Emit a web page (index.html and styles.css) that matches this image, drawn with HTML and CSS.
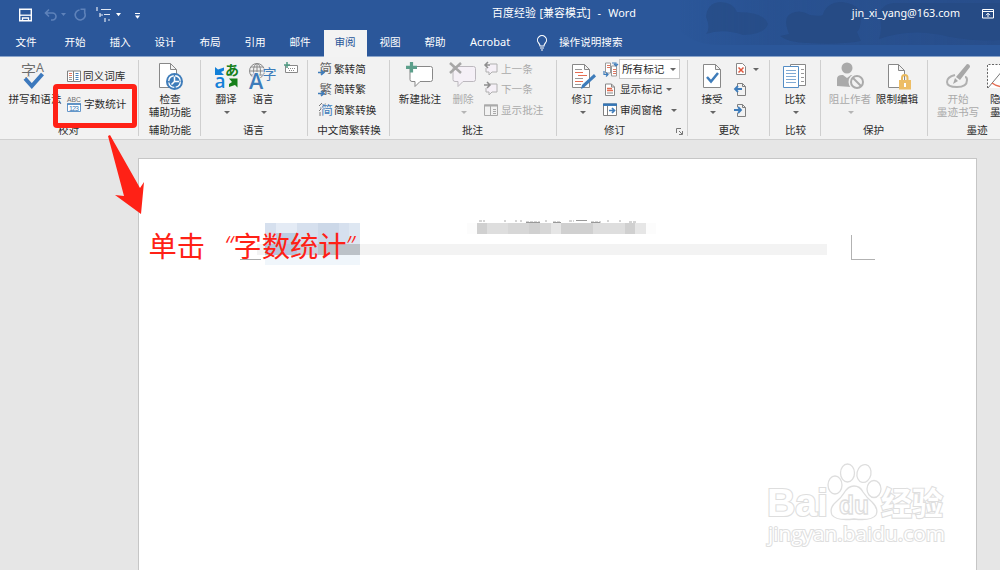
FILE: index.html
```html
<!DOCTYPE html>
<html lang="zh-CN">
<head>
<meta charset="utf-8">
<title>百度经验 - Word</title>
<link rel="stylesheet" href="styles.css">
</head>
<body>
<div class="app">
<header class="header">
  <svg class="clouds" width="320" height="46" viewBox="0 0 320 46">
    <defs><linearGradient id="haze"><stop offset="0" stop-color="#284f8d" stop-opacity="0"/><stop offset=".3" stop-color="#284f8d" stop-opacity=".7"/><stop offset="1" stop-color="#284d89" stop-opacity=".9"/></linearGradient></defs>
    <path fill="url(#haze)" d="M0 0H320V45H40Q15 45 0 30z"/>
    <g fill="#264b85"><path d="M26 34Q31 28 26 17Q27 3 40 2Q53 2 57 12Q84 12 88 24Q84 35 63 35Q43 28 26 34z" opacity=".7"/><path d="M100 36L109 34Q102 17 112 13Q121 9 130 15Q143 17 143 14Q147 2 162 2Q180 4 181 16Q181 29 177 32L181 41Q158 45 128 43Q109 43 100 36z"/><path d="M199 39Q203 29 199 13Q204 3 214 3H320V40Q300 42 270 37Q232 27 199 39z"/></g>
  </svg>
  <div class="titlebar">
    <div class="quick">
      <svg width="130" height="18" viewBox="0 0 130 18" fill="none">
        <path d="M1.700 4.200H13.300V15.800H1.700z" stroke="#fff" stroke-width="1.400"/><path d="M2 10.200H13" stroke="#fff" stroke-width="1.300"/><path d="M4.500 16v-3h6V16" stroke="#fff" stroke-width="1.300"/>
        <g stroke="#5e82ba" stroke-width="1.600"><path d="M31 4.500L27.500 8 31 11.500M28 8h6.500a3 3 0 0 1 0 7H33"/><path d="M61.500 5a5 5 0 1 0 5.500 3.500M62.500 4.200h4.200v4.500"/></g>
        <path d="M43 8h5l-2.500 3z" fill="#5e82ba"/>
        <path d="M79 2v4M83 4.500h10M82 8v4m0-2h3M86 9.500h6M87 13v4M90 15h2" stroke="#dfe7f4" stroke-width="1.200"/>
        <path d="M98 8h5l-2.500 3.200zM117 10.500h5l-2.500 3.200z" fill="#fff"/><path d="M117 8.500h5" stroke="#fff"/>
      </svg>
    </div>
    <div class="doc-title">百度经验 [兼容模式]&nbsp; -&nbsp; Word</div>
    <div class="account">jin_xi_yang@163.com</div>
    <svg class="display" width="12" height="10" viewBox="0 0 12 10" fill="none" stroke="#fff"><path d="M.5.5h11v8.500H.5zM1 2.500h10M6 8V4.500M4 6.200l2-2 2 2"/></svg>
  </div>
  <nav class="tabs">
    <span class="tab file">文件</span><span class="tab">开始</span><span class="tab">插入</span><span class="tab">设计</span><span class="tab">布局</span><span class="tab">引用</span><span class="tab">邮件</span><span class="tab active">审阅</span><span class="tab">视图</span><span class="tab">帮助</span><span class="tab acrobat">Acrobat</span>
    <span class="search"><svg width="12" height="16" viewBox="0 0 12 16" fill="none" stroke="#fff" stroke-width="1.100"><path d="M4 11Q4 9.500 2.600 8A4.500 4.500 0 1 1 9.400 8Q8 9.500 8 11zM4 13h4M5 15h2"/></svg>操作说明搜索</span>
  </nav>
</header>

<div class="ribbon">
  <section class="group g-proof">
    <div class="body">
      <div class="big w54"><svg width="28" height="30" viewBox="0 0 28 30"><text x="0" y="14" class="glyph" font-size="15">字</text><text x="15" y="9.500" class="glyph latin" font-size="12.500">A</text><path d="M5 16l6.500 7.500L22 11.500" fill="none" stroke="#f2f2f2" stroke-width="6"/><path d="M4 16.500l6.800 7.500L21.500 12" fill="none" stroke="#3d79bd" stroke-width="4"/></svg><span>拼写和语法</span></div>
      <div class="rows proof-rows">
        <div class="row"><svg width="14" height="14" viewBox="0 0 14 14" fill="none"><path d="M.5 2h6v10.500h-6zM6.500 2h7v10.500h-7z" fill="#fff" stroke="#808080"/><path d="M2 4.500h3M2 6.500h3" stroke="#e27861"/><path d="M2 8.500h3M2 10.500h3" stroke="#999"/><path d="M8.500 4.500h3M8.500 6.500h3M8.500 8.500h3M8.500 10.500h3" stroke="#4682bd"/></svg>同义词库</div>
        <div class="row"><svg width="15" height="16" viewBox="0 0 15 16"><text x="0" y="6" font-size="7" textLength="14" lengthAdjust="spacingAndGlyphs" class="glyph digits">ABC</text><path d="M.5 8h13v7.500H.5z" fill="#fff" stroke="#6497ca"/><path d="M0 8h14" stroke="#4682bd" stroke-width="1.500"/><text x="2" y="14.600" font-size="7" textLength="10" fill="#3475b5" class="digits">123</text></svg>字数统计</div>
      </div>
    </div>
    <div class="label">校对</div>
  </section>

  <section class="group g-access">
    <div class="body"><div class="big w54"><svg width="28" height="30" viewBox="0 0 28 30" fill="none"><path d="M3.500 1.500h11l6 6v18h-17zM14.500 1.500v6h6" fill="#fff" stroke="#888"/><circle cx="18.500" cy="19.500" r="8.500" fill="#3e7cba"/><circle cx="18.500" cy="19.500" r="5.800" stroke="#fff" stroke-width="1.300" stroke-dasharray="7.600 1.500"/><path d="M18.500 14.500v5h4.500M18.500 19.500l-3 3" stroke="#fff" stroke-width="1.500"/></svg><span>检查<br>辅助功能</span></div></div>
    <div class="label">辅助功能</div>
  </section>

  <section class="group g-lang">
    <div class="body">
      <div class="big w38"><svg width="26" height="30" viewBox="0 0 26 30"><path d="M2 5l3 2.500 6-2v3L8 10l3 3H2z" fill="#1380d8"/><text x="12" y="13" font-size="14" font-weight="700" fill="#16801b">あ</text><text x="1.500" y="26" font-size="19" fill="#1380d8" class="latin">a</text><path d="M16 16.500h8.500v9l-2.500-2.500-6 2v-3l3-2z" fill="#16801b"/></svg><span>翻译</span><i class="caret"></i></div>
      <div class="big w38"><svg width="28" height="30" viewBox="0 0 28 30"><g fill="none" stroke="#8a8a8a"><circle cx="8" cy="9" r="7.500"/><ellipse cx="8" cy="9" rx="3.500" ry="7.500"/><path d="M8 1.500v15M1 9h14M2 5h12M2 13h12"/></g><text x="0" y="27" font-size="21.500" fill="#3e7cba" stroke="#f2f2f2" stroke-width="2" paint-order="stroke" class="latin">A</text><text x="13.500" y="16.500" font-size="14" fill="#3e7cba" stroke="#f2f2f2" stroke-width="1" paint-order="stroke">字</text></svg><span>语言</span><i class="caret"></i></div>
      <svg class="keyboard" width="15" height="13" viewBox="0 0 15 13" fill="none"><path d="M1.500 3.500h12v7h-12z" fill="#fff" stroke="#888"/><path d="M4 6.500h8M5 8.500h6" stroke="#888" stroke-dasharray="1 1"/><path d="M3 0v6M0 3h6" stroke="#4f9a82" stroke-width="1.500"/></svg>
    </div>
    <div class="label">语言</div>
  </section>

  <section class="group g-conv">
    <div class="body"><div class="rows">
      <div class="row"><svg width="15" height="16" viewBox="0 0 15 16"><text x="1.500" y="12" font-size="12.500" fill="#666">简</text><path d="M0 11.500h5M3 9l3 2.500L3 14" fill="none" stroke="#3e7cba" stroke-width="1.600"/></svg>繁转简</div>
      <div class="row"><svg width="15" height="16" viewBox="0 0 15 16"><text x="1.500" y="12" font-size="12.500" fill="#666">繁</text><path d="M0 11.500h5M3 9l3 2.500L3 14" fill="none" stroke="#3e7cba" stroke-width="1.600"/></svg>简转繁</div>
      <div class="row"><svg width="15" height="16" viewBox="0 0 15 16"><path d="M1 4l3-3M4 3l4-1M2 6h3M1 9l2-2M2 10v4" stroke="#777" fill="none"/><text x="3" y="13" font-size="12" fill="#3e7cba" stroke="#f2f2f2" stroke-width="1" paint-order="stroke">简</text></svg>简繁转换</div>
    </div></div>
    <div class="label">中文简繁转换</div>
  </section>

  <section class="group g-comment">
    <div class="body">
      <div class="big w46"><svg width="28" height="30" viewBox="0 0 28 30"><path d="M4 4.500h20.500q2 0 2 2V17.500q0 2-2 2H14l-5 5v-5H6q-2 0-2-2V6z" fill="#fff" stroke="#888"/><path d="M5.500 0v10.500M0 5.300h11" stroke="#5c9f8b" stroke-width="3.200"/></svg><span>新建批注</span></div>
      <div class="big w40 disabled"><svg width="28" height="30" viewBox="0 0 28 30"><path d="M5 4.500h19.500q2 0 2 2V17.500q0 2-2 2H14l-5 5v-5H6q-2 0-2-2V6z" fill="#f5f0f7" stroke="#bcb8be"/><path d="M1 1l11 10M12 1L1 11" stroke="#a7a7a7" stroke-width="2.500"/></svg><span>删除</span><i class="caret"></i></div>
      <div class="rows disabled comment-rows">
        <div class="row"><svg width="15" height="15" viewBox="0 0 15 15" fill="none" stroke="#b0b0b0"><path d="M6 2h7v8H8l-3 3v-3H2V6" fill="#f5f0f7"/><path d="M6 3H1m3-3L1 3l3 3" stroke="#8e8e8e" stroke-width="1.500"/></svg>上一条</div>
        <div class="row"><svg width="15" height="15" viewBox="0 0 15 15" fill="none" stroke="#b0b0b0"><path d="M6 2h7v8H8l-3 3v-3H2V6" fill="#f5f0f7"/><path d="M0 3h6M3 0l3 3-3 3" stroke="#8e8e8e" stroke-width="1.500"/></svg>下一条</div>
        <div class="row"><svg width="15" height="13" viewBox="0 0 15 13" fill="none" stroke="#aaa"><path d="M.5 1h13v10.500H.5z"/><path d="M0 1.500h14" stroke-width="2"/><path d="M6.500 2v9M9 5.500h3M9 7.500h3M9 9.500h3"/></svg>显示批注</div>
      </div>
    </div>
    <div class="label">批注</div>
  </section>

  <section class="group g-track">
    <div class="body">
      <div class="big w36"><svg width="28" height="30" viewBox="0 0 28 30" fill="none"><path d="M4.500 2.500h12l5 5v18h-17zM16.500 2.500v5h5" fill="#fff" stroke="#888"/><path d="M7 7.500h7M7 16.500h8M7 22.500h6" stroke="#999"/><path d="M7 10.500h8M10 13.500h9M7 19.500h8" stroke="#e66c51"/><path d="M13 27l1-4L26 12l2 2.500L16 25.500z" fill="#3e7cba"/></svg><span>修订</span><i class="caret"></i></div>
      <div class="rows track-rows">
        <div class="row"><svg width="16" height="16" viewBox="0 0 16 16" fill="none"><path d="M2.500 2h5v10h-5zM8.500 5h5v10h-5z" fill="#fff" stroke="#999"/><path d="M4 4.500h3M4 6.500h3M10 8.500h3M10 10.500h3M10 12.500h3" stroke="#df765f"/><path d="M9 2h4v2.500m-2-1.500l2 2 2-2M1 10v3.500h4m-2-2l2 2-2 2" stroke="#3e7cba" stroke-width="1.200"/></svg><div class="combo">所有标记<i class="caret"></i></div></div>
        <div class="row"><svg width="17" height="14" viewBox="0 0 17 14" fill="none"><path d="M2.500 1h6l3 3v8.500h-9zM8.500 1v3h3" fill="#fff" stroke="#888"/><path d="M4 5.500h5M4 7.500h6" stroke="#e66c51" stroke-width="1.300"/><path d="M4 10h6" stroke="#888"/></svg>显示标记<i class="caret"></i></div>
        <div class="row pane"><svg width="17" height="14" viewBox="0 0 17 14" fill="none"><path d="M.5 1h13v11.500H.5z" fill="#fff" stroke="#808080"/><path d="M0 1.700h14" stroke="#3475b5" stroke-width="2.500"/><path d="M4.500 3v9" stroke="#808080"/><path d="M6 7.500h5M9 5l2.500 2.500L9 10" stroke="#3e7cba" stroke-width="1.700"/></svg>审阅窗格<i class="caret"></i></div>
      </div>
    </div>
    <div class="label">修订</div>
    <svg class="launcher" width="7" height="7" viewBox="0 0 7 7" fill="none" stroke="#777"><path d="M.5 5V.5H5M3 3l3 3M6.500 3v3.500H3"/></svg>
  </section>

  <section class="group g-change">
    <div class="body">
      <div class="big w36"><svg width="28" height="30" viewBox="0 0 28 30" fill="none"><path d="M5.500 2.500h12l5 5v18h-17v-23zM17.500 2.500v5h5" fill="#fff" stroke="#888"/><path d="M9 15l4 4.500 7-8.500" stroke="#3e7cba" stroke-width="2.500"/></svg><span>接受</span><i class="caret"></i></div>
      <div class="rows change-rows">
        <div class="row"><svg width="14" height="14" viewBox="0 0 14 14" fill="none"><path d="M2.500 1.500h6l3 3v8h-9z" fill="#fff" stroke="#888"/><path d="M4.500 5.500l5 5m0-5l-5 5" stroke="#df583e" stroke-width="1.500"/></svg><i class="caret"></i></div>
        <div class="row"><svg width="14" height="15" viewBox="0 0 14 15" fill="none"><path d="M3.500 4V1.500h5l3 3v9h-8V10M8.500 1.500v3h3" stroke="#808080"/><path d="M8 7H1m3-3L1 7l3 3" stroke="#3e7cba" stroke-width="1.800"/></svg></div>
        <div class="row"><svg width="14" height="15" viewBox="0 0 14 15" fill="none"><path d="M3.500 4V1.500h5l3 3v9h-8V10M8.500 1.500v3h3" stroke="#808080"/><path d="M0 7h7M4 4l3 3-3 3" stroke="#3e7cba" stroke-width="1.800"/></svg></div>
      </div>
    </div>
    <div class="label">更改</div>
  </section>

  <section class="group g-compare">
    <div class="body"><div class="big w46"><svg width="28" height="30" viewBox="0 0 28 30" fill="none"><path d="M9.500 2.500h15v21h-15z" fill="#fff" stroke="#888"/><path d="M20 7.500h3M20 11.500h3M20 15.500h3M20 19.500h3" stroke="#999"/><path d="M2.500 4.500h15v21h-15z" fill="#fff" stroke="#548dc5"/><path d="M5 8.500h10M5 11.500h10M5 14.500h10M5 17.500h10M5 20.500h10" stroke="#7fa9d3"/></svg><span>比较</span><i class="caret"></i></div></div>
    <div class="label">比较</div>
  </section>

  <section class="group g-protect">
    <div class="body">
      <div class="big w46 disabled"><svg width="28" height="30" viewBox="0 0 28 30"><circle cx="11" cy="6" r="5.500" fill="#aaa"/><path d="M1 24v-7q0-4 5-4h1l4 3 4-3h3q4 2 4 6l-7 6z" fill="#aaa"/><circle cx="21" cy="20" r="6" fill="#f2f2f2" stroke="#f2f2f2" stroke-width="5"/><circle cx="21" cy="20" r="6" fill="none" stroke="#aaa" stroke-width="2"/><path d="M17 16l8 8" stroke="#aaa" stroke-width="2"/></svg><span>阻止作者</span><i class="caret"></i></div>
      <div class="big w46"><svg width="28" height="30" viewBox="0 0 28 30" fill="none"><path d="M5.500 2.500h10l6 6v17h-16zM15.500 2.500v6h6" fill="#fff" stroke="#888"/><path d="M19 19v-3q0-3 2.800-3t2.700 3v3" stroke="#e8b85c" stroke-width="2"/><path d="M16 18h12v9.500H16z" fill="#edbd65"/><path d="M22 21v4" stroke="#fff" stroke-width="2"/></svg><span>限制编辑</span></div>
    </div>
    <div class="label">保护</div>
  </section>

  <section class="group g-ink">
    <div class="body">
      <div class="big w46 disabled"><svg width="28" height="30" viewBox="0 0 28 30" fill="none"><path d="M11 13Q3 15 3 20q0 5 10 5t10-7q0-3-2-3" stroke="#b0b0b0" stroke-width="2"/><path d="M23 2q3 0 3 3L16 18l-4-3zM11 16l3 3-5 3z" fill="#a8a8a8"/></svg><span>开始<br>墨迹书写</span></div>
      <div class="big w46 hide-ink"><svg width="28" height="30" viewBox="0 0 28 30" fill="none"><path d="M-2 3h28v23H-2z" fill="#fff"/><path d="M-2.500 26V2.500H27" stroke="#666" stroke-dasharray="2 1.500"/><path d="M-2 26L13 8" stroke="#777"/><path d="M2 21q5 4 15 4" stroke="#e66c51" stroke-width="1.500"/></svg><span>隐藏<br>墨迹</span></div>
    </div>
    <div class="label">墨迹</div>
  </section>
</div>

<main class="workspace">
  <div class="page">
    <div class="censor-head"><i></i><i></i><i></i><i></i><i></i><i></i><i></i><i></i><i></i><i></i><i></i><i></i><i></i><i></i><i></i><i></i></div>
    <svg class="header-marks" width="170" height="3" viewBox="0 0 170 3"><path d="M4 1h3M8 1h2M29 1h2M40 1h2M45 1h2M51 2h14M70 1h2M78 2h8M94 1h5M116 2h10M132 1h2M144 1h2M154 2h8" stroke="#aaa" stroke-dasharray="3 1"/><path d="M101 .500h11M51 2.500h14M78 2.500h8M116 2.500h9" stroke="#999"/></svg>
    <div class="censor-line"></div>
    <div class="censor-blue"><i></i><i></i><i></i><i></i><i></i><i></i><i></i><i></i><i></i></div>
    <div class="corner-left"></div>
    <div class="corner"></div>
    <svg class="watermark" width="190" height="100" viewBox="0 0 190 100">
      <g fill="#fff" stroke="#dedede" stroke-width="1.300">
        <g class="wm-text" paint-order="stroke" stroke-width="2.200"><text x="7" y="55" font-size="39" font-weight="700" textLength="61" lengthAdjust="spacingAndGlyphs">Bai</text><text x="121" y="53.500" font-size="32" font-weight="700" textLength="62" lengthAdjust="spacingAndGlyphs" class="wm-cjk">经验</text><text x="8" y="80" font-size="20" textLength="177" lengthAdjust="spacingAndGlyphs" class="wm-url">jingyan.baidu.com</text></g>
        <ellipse cx="75" cy="24" rx="7" ry="9"/><ellipse cx="87.500" cy="12" rx="7" ry="9"/><ellipse cx="104" cy="12.500" rx="7" ry="9" transform="rotate(12 104 12.500)"/><ellipse cx="114" cy="28" rx="7" ry="8.500"/>
        <path d="M94 25Q88 25 84 32Q81 37 76 41Q69 47 72 54Q76 60 94 58Q112 60 116 54Q119 48 112 41Q107 37 103 31Q100 25 94 25z"/>
        <text x="79" y="53" font-size="25" font-weight="700" textLength="30" lengthAdjust="spacingAndGlyphs" class="wm-text">du</text>
      </g>
    </svg>
  </div>
</main>
<div class="highlight"></div>
<svg class="arrow" width="40" height="84" viewBox="0 0 40 84"><path d="M1 3L3 2 33 55 37 49 34 81 8 62 17 63z" fill="#ff2116"/></svg>
<div class="hint">单击<span class="quote open">“</span>字数统计<span class="quote close">”</span></div>
</div>
</body>
</html>
```
FILE: styles.css
```css
* { box-sizing: border-box; }
body { margin: 0; }
.app { position: relative; width: 1000px; height: 570px; overflow: hidden; display: flex; flex-direction: column; background: #e6e6e6; font: 10.6px/13px "Noto Sans", "Noto Sans CJK SC", sans-serif; color: #2c2c2c; }
svg { flex: none; display: block; overflow: visible; }
svg text { font-family: "Noto Sans CJK SC", sans-serif; }
svg .glyph { fill: #6d6d6d; }
svg .digits { font-family: "Liberation Sans", sans-serif; }
svg .latin { font-family: "Open Sans", sans-serif; font-weight: 600; }
svg .glyph.latin { font-weight: 400; }

.header { position: relative; height: 57px; background: #2b579a; color: #fff; border-bottom: 1px solid #8ba5cb; flex: none; }
.clouds { position: absolute; right: 0; top: 0; filter: blur(.6px); }
.titlebar { position: relative; display: flex; align-items: center; height: 27px; font-size: 10.9px; }
.quick { width: 474px; padding-left: 18px; padding-top: 1px; }
.doc-title { width: 180px; text-align: center; white-space: nowrap; word-spacing: .6px; letter-spacing: .07px; padding-bottom: 2px; }
.account { margin-left: auto; margin-right: 22px; font-size: 10.8px; padding-bottom: 2px; }
.display { margin-right: 6px; }
.tabs { position: relative; display: flex; height: 29px; padding-top: 3px; }
.tab { width: 45px; text-align: center; line-height: 25px; height: 27px; }
.tab.file { width: 52px; }
.tab.file + .tab { margin-left: .6px; }
.tab.acrobat { width: 65px; font-size: 11px; line-height: 24px; }
.tab.active { width: 43px; margin: 0 1px; background: #f3f3f3; color: #2b579a; }
.search { display: flex; align-items: center; gap: 11px; height: 25px; margin-left: 13.4px; }

.ribbon { display: flex; flex: none; height: 83px; background: #f2f2f2; border-bottom: 1px solid #d0d0d0; overflow: hidden; }
.group { position: relative; flex: none; height: 82px; }
.group::after { content: ""; position: absolute; right: 0; top: 3px; height: 76px; width: 1px; background: #cfcfcf; }
.g-proof { width: 139px; } .g-access { width: 62px; } .g-lang { width: 107px; } .g-conv { width: 82px; }
.g-comment { width: 167px; } .g-track { width: 131px; } .g-change { width: 82px; } .g-compare { width: 51px; }
.g-protect { width: 107px; } .g-ink { width: 98px; }
.body { display: flex; height: 66px; }
.label { text-align: center; line-height: 15px; white-space: nowrap; }
.g-proof .label, .g-lang .label, .g-comment .label, .g-protect .label { padding-right: 2px; }
.g-track .label { padding-right: 16px; }
.big { flex: none; display: flex; flex-direction: column; align-items: center; text-align: center; padding-top: 5px; white-space: nowrap; }
.big span { position: relative; top: .5px; }
.w36 { width: 36px; } .w38 { width: 38px; } .w40 { width: 40px; } .w46 { width: 46px; } .w54 { width: 54px; }
.disabled { color: #aaa; }
.rows { display: flex; flex-direction: column; padding-top: 2px; }
.row { display: flex; align-items: center; height: 20.5px; white-space: nowrap; gap: 2px; }
.caret { flex: none; width: 0; height: 0; border: 3px solid transparent; border-top: 3px solid #666; border-bottom: 0; margin-left: 6px; }
.big .caret { margin: 6px 0 0 1px; }
.disabled .caret { border-top-color: #b5b5b5; }
.g-proof .body { padding-left: 8px; }
.proof-rows { padding: 9px 0 0 5px; gap: 7.5px; }
.g-access .body { padding-left: 4px; }
.g-lang .body { padding-left: 6px; }
.g-lang .big + .big { margin-left: -1px; }
.keyboard { margin: 5px 0 0 2px; }
.g-conv .body { padding-left: 10px; }
.g-conv .row { gap: 1px; }
.g-comment .body { padding-left: 7px; }
.comment-rows { padding-left: 1px; }
.g-track .body { padding-left: 7px; }
.track-rows { padding-left: 3px; }
.track-rows .row { gap: 0; }
.combo { display: flex; align-items: center; width: 61px; height: 20px; padding-left: 2px; background: #fff; border: 1px solid #c8c8c8; }
.combo .caret { margin-left: 6px; }
.track-rows .row > .caret { margin-left: 4px; }
.track-rows .pane > .caret { margin-left: 9px; }
.launcher { position: absolute; right: 5px; bottom: 4px; }
.g-change .body { padding-left: 6px; }
.change-rows { padding-left: 4px; }
.change-rows .caret { margin-left: 3px; }
.g-compare .body { padding-left: 2px; }
.g-protect .body { padding-left: 6px; }
.g-protect .big + .big { margin-left: 1px; }
.g-ink .body { padding-left: 7px; }
.hide-ink { align-items: flex-start; padding-left: 9px; }

.workspace { flex: 1; min-height: 0; padding: 18px 23px 0 138px; }
.page { position: relative; height: 412px; background: #fff; border: 1px solid #c6c6c6; border-bottom: 0; }
.censor-head { position: absolute; left: 338px; top: 64px; display: flex; box-shadow: -10px 0 #fcfcfc, 10px 0 #fcfcfc; }
.censor-head i { width: 10.6px; height: 11px; background: #dedede; }
.censor-head i:nth-child(1) { width: 10px; background: #d0d0d0; }
.censor-head i:nth-child(4), .censor-head i:nth-child(5), .censor-head i:nth-child(7) { background: #d7d7d7; }
.censor-head i:nth-child(6), .censor-head i:nth-child(9), .censor-head i:nth-child(10), .censor-head i:nth-child(11), .censor-head i:nth-child(15) { background: #d0d0d0; }
.censor-head i:nth-child(8), .censor-head i:nth-child(16) { background: #e6e6e6; }
.header-marks { position: absolute; left: 336px; top: 61px; }
.censor-line { position: absolute; left: 118px; top: 85px; width: 570px; height: 11px; background: #f3f3f3; }
.censor-blue { position: absolute; left: 126px; top: 64px; width: 95px; height: 42px; display: grid; grid-template-columns: repeat(9, 1fr); background: linear-gradient(#dae3f0 0 21px, transparent 21px 32px, #f0f6fb 32px), linear-gradient(90deg, #b4c4dc 0 32px, #c9d2dc 32px 53px, #bcc2c8 53px); }
.censor-blue i { height: 21px; background: #d6e0ee; }
.censor-blue i:nth-child(2), .censor-blue i:nth-child(3) { background: linear-gradient(#e4ebf5 10px, #bccde4 10px); }
.censor-blue i:nth-child(6), .censor-blue i:nth-child(7) { background: #ccd8e8; }
.censor-blue i:nth-child(9) { background: #dee7f2; }
.corner-left { position: absolute; left: 101px; top: 100px; width: 21px; height: 1px; background: #aaa; }
.corner { position: absolute; left: 712px; top: 76px; width: 24px; height: 25px; border: solid #b2b2b2; border-width: 0 0 1px 1px; }
.watermark { position: absolute; left: 621px; top: 302px; }
.wm-text text, text.wm-text { font-family: "Liberation Sans", sans-serif; }
.wm-text .wm-cjk { font-family: "Noto Sans CJK SC", sans-serif; }
.wm-text .wm-url { font-family: "Open Sans", sans-serif; font-weight: 500; stroke-width: 2px; }

.highlight { position: absolute; left: 53px; top: 84px; width: 84px; height: 44px; border: 5px solid #ff2116; border-radius: 4px; }
.arrow { position: absolute; left: 107px; top: 133px; }
.hint { position: absolute; left: 148.5px; top: 226px; display: flex; font: 400 28.3px/38px "Noto Sans CJK SC", sans-serif; color: #ff2116; white-space: nowrap; }
.quote { width: 28.3px; font-family: "Open Sans", sans-serif; font-weight: 300; font-style: italic; }
.quote.open { text-align: right; padding-right: 1px; }
.quote.close { margin-left: -1px; }
```
